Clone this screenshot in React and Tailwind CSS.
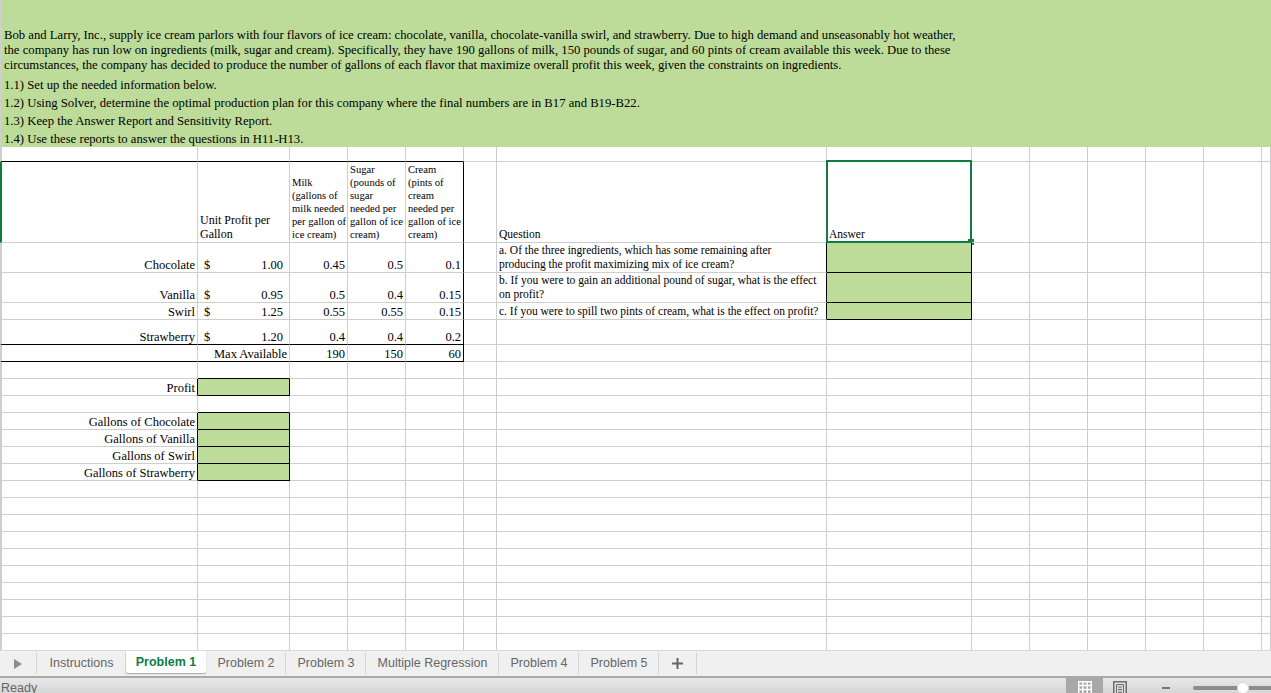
import React from "react";

const grid = "border-[#cecece]";
const black = "border-b-black";
const green = "bg-[#bddc9a]";

// columns A-H of each spreadsheet row, the rest are blank
const rows = [
  { a: { className: black }, b: { className: black }, c: { className: black }, d: { className: black }, e: { className: black } },
  {
    a: { className: "border-l-[#107c41]" },
    b: { text: ["Unit Profit per", "Gallon"], className: "text-[12px] leading-[14px] pl-[2px] pb-px" },
    c: { text: ["Milk", "(gallons of", "milk needed", "per gallon of", "ice cream)"], className: "text-[10.6px] leading-[13px] pl-[2px] pb-px" },
    d: { text: ["Sugar", "(pounds of", "sugar", "needed per", "gallon of ice", "cream)"], className: "text-[10.6px] leading-[13px] pl-[2px] pb-px" },
    e: { text: ["Cream", "(pints of", "cream", "needed per", "gallon of ice", "cream)"], className: "text-[10.6px] leading-[13px] pl-[2px] pb-px border-r-black" },
    g: { text: ["Question"], className: "text-[11.5px] pl-[2px] pb-px" },
    h: { text: ["Answer"], className: "text-[11.5px] pl-[2px] pb-px", selected: true },
  },
  {
    a: { text: ["Chocolate"], className: "items-end" },
    money: "1.00",
    c: { num: "0.45" }, d: { num: "0.5" }, e: { num: "0.1", className: "border-r-black" },
    g: { text: ["a. Of the three ingredients, which has some remaining after", "producing the profit maximizing mix of ice cream?"], className: "text-[11.5px] leading-[14px] pl-[2px] pb-px border-r-black" },
    h: { className: `${green} border-r-black ${black}` },
  },
  {
    a: { text: ["Vanilla"], className: "items-end" },
    money: "0.95",
    c: { num: "0.5" }, d: { num: "0.4" }, e: { num: "0.15", className: "border-r-black" },
    g: { text: ["b. If you were to gain an additional pound of sugar, what is the effect", "on profit?"], className: "text-[11.5px] leading-[14px] pl-[2px] pb-px border-r-black" },
    h: { className: `${green} border-r-black ${black}` },
  },
  {
    a: { text: ["Swirl"], className: "items-end" },
    money: "1.25",
    c: { num: "0.55" }, d: { num: "0.55" }, e: { num: "0.15", className: "border-r-black" },
    g: { text: ["c. If you were to spill two pints of cream, what is the effect on profit?"], className: "text-[11.5px] pl-[2px] pb-px border-r-black" },
    h: { className: `${green} border-r-black ${black}` },
  },
  {
    a: { text: ["Strawberry"], className: `items-end ${black}` },
    money: "1.20",
    moneyClass: black,
    c: { num: "0.4", className: black }, d: { num: "0.4", className: black }, e: { num: "0.2", className: `border-r-black ${black}` },
  },
  {
    a: { className: black },
    b: { text: ["Max Available"], className: `items-end pr-[2px] ${black}` },
    c: { num: "190", className: black }, d: { num: "150", className: black }, e: { num: "60", className: `border-r-black ${black}` },
  },
  { b: { className: black } },
  { a: { text: ["Profit"], className: "items-end border-r-black" }, b: { className: `${green} border-r-black ${black}` } },
  { b: { className: black } },
  { a: { text: ["Gallons of Chocolate"], className: "items-end border-r-black" }, b: { className: `${green} border-r-black ${black}` } },
  { a: { text: ["Gallons of Vanilla"], className: "items-end border-r-black" }, b: { className: `${green} border-r-black ${black}` } },
  { a: { text: ["Gallons of Swirl"], className: "items-end border-r-black" }, b: { className: `${green} border-r-black ${black}` } },
  { a: { text: ["Gallons of Strawberry"], className: "items-end border-r-black" }, b: { className: `${green} border-r-black ${black}` } },
  ...Array.from({ length: 10 }, () => ({})),
];

const keys = ["a", "b", "c", "d", "e", "f", "g", "h", "i", "j", "k", "l", "m", "n"];

const Cell = ({ spec = {}, col }) => {
  const leftEdge = col === "a" ? "border-l-2 pr-[2px]" : "";
  if (spec.num) {
    return (
      <div className={`border-r border-b ${grid} flex items-end justify-end pr-[2px] whitespace-nowrap ${spec.className || ""}`}>
        {spec.num}
      </div>
    );
  }
  return (
    <div className={`relative border-r border-b ${grid} ${leftEdge} flex flex-col justify-end whitespace-nowrap ${spec.className || ""}`}>
      {spec.text && spec.text.map((line) => <span key={line}>{line}</span>)}
      {spec.selected && (
        <div className="absolute -left-px -top-[2px] -right-px -bottom-px border-2 border-[#107c41]">
          <div className="absolute -right-[4px] -bottom-[4px] w-[6px] h-[6px] bg-[#107c41]" />
        </div>
      )}
    </div>
  );
};

const MoneyCell = ({ value, className }) => (
  <div className={`border-r border-b ${grid} flex items-end justify-between pl-[6px] pr-[6px] ${className || ""}`}>
    <span>$</span>
    <span>{value}</span>
  </div>
);

const tabs = [
  { name: "Instructions", w: "w-[89px]" },
  { name: "Problem 1", w: "w-[80px]", active: true },
  { name: "Problem 2", w: "w-[80px]" },
  { name: "Problem 3", w: "w-[80px]" },
  { name: "Multiple Regression", w: "w-[133px]" },
  { name: "Problem 4", w: "w-[80px]" },
  { name: "Problem 5", w: "w-[80px]" },
];

const App = () => {
  return (
    <div className="w-[1271px] h-[693px] overflow-hidden flex flex-col bg-white text-black text-[12.5px] leading-[13px] font-['Liberation_Serif',serif]">
      {/* Instructions banner */}
      <div className="h-[147px] shrink-0 bg-[#bddc9a] border-l-2 border-[#cecece] pl-[2px] pt-[28px] text-[12.7px] whitespace-nowrap">
        <div className="leading-[15px]">
          <div>Bob and Larry, Inc., supply ice cream parlors with four flavors of ice cream: chocolate, vanilla, chocolate-vanilla swirl, and strawberry.  Due to high demand and unseasonably hot weather,</div>
          <div>the company has run low on ingredients (milk, sugar and cream).  Specifically, they have 190 gallons of milk, 150 pounds of sugar, and 60 pints of cream available this week.  Due to these</div>
          <div>circumstances, the company has decided to produce the number of gallons of each flavor that maximize overall profit this week, given the constraints on ingredients.</div>
        </div>
        <div className="leading-[18px] mt-[3px]">
          <div>1.1) Set up the needed information below.</div>
          <div>1.2) Using Solver, determine the optimal production plan for this company where the final numbers are in B17 and B19-B22.</div>
          <div>1.3) Keep the Answer Report and Sensitivity Report.</div>
          <div>1.4) Use these reports to answer the questions in H11-H13.</div>
        </div>
      </div>

      {/* Sheet */}
      <div className="flex-1 min-h-0 overflow-hidden">
        <div className="grid grid-cols-[198px_92px_58px_58px_58px_33px_330px_145px_58px_58px_58px_58px_58px_1fr] grid-rows-[15px_81px_30px_30px_17px_25px_17px_repeat(17,17px)]">
          {rows.map((row, r) =>
            keys.map((col) =>
              col === "b" && row.money ? (
                <MoneyCell key={`${r}-${col}`} value={row.money} className={row.moneyClass} />
              ) : (
                <Cell key={`${r}-${col}`} spec={row[col]} col={col} />
              )
            )
          )}
        </div>
      </div>

      {/* Sheet tabs */}
      <div className="h-[26px] shrink-0 flex bg-[#f0f0f0] border-t border-[#d9d9d9] font-['Liberation_Sans',sans-serif] text-[12.5px] text-[#666]">
        <div className="w-[37px] flex items-center justify-center border-r border-[#d4d4d4] my-[2px]">
          <svg width="8" height="10" viewBox="0 0 8 10"><path d="M0 0 L8 5 L0 10 Z" fill="#8c8c8c" /></svg>
        </div>
        {tabs.map((t) =>
          t.active ? (
            <div key={t.name} className={`${t.w} h-[22px] flex items-center justify-center bg-white font-bold text-[#107c41] rounded-b-[2px] shadow-[0_1px_1px_#aaa]`}>
              {t.name}
            </div>
          ) : (
            <div key={t.name} className={`${t.w} flex items-center justify-center border-r border-[#d4d4d4] my-[2px] pl-px pb-px`}>
              {t.name}
            </div>
          )
        )}
        <div className="w-[38px] flex items-center justify-center border-r border-[#d4d4d4] my-[2px]">
          <svg width="11" height="11" viewBox="0 0 11 11"><path d="M4.5 0h2v4.5H11v2H6.5V11h-2V6.5H0v-2h4.5z" fill="#666" /></svg>
        </div>
      </div>

      {/* Status bar */}
      <div className="h-[17px] shrink-0 flex items-start border-t-2 border-[#a9a9a9] bg-gradient-to-b from-[#e8e8e8] to-[#d6d6d6] font-['Liberation_Sans',sans-serif] text-[12.5px] text-[#666] overflow-hidden">
        <span className="pl-[1px] leading-[16px] pt-[2px]">Ready</span>
        <div className="ml-auto flex items-start h-full">
          <div className="w-[37px] h-full bg-[#a8a8a8] flex justify-center pt-[3px]">
            <svg width="14" height="13" viewBox="0 0 14 13" fill="none" stroke="#fff" strokeWidth="1.4"><path d="M.7 .7h12.6v13H.7zM.7 4.5h12.6M.7 8.5h12.6M4.8 .7v13M9.2 .7v13" /></svg>
          </div>
          <div className="w-[34px] flex justify-center pt-[3px]">
            <svg width="14" height="13" viewBox="0 0 14 13" fill="none" stroke="#6e6e6e"><path strokeWidth="1.5" d="M.75 .75h12.5v13H.75z" /><path d="M3.5 3.5h7v10h-7zM5 6h4M5 8.5h4M5 11h4" /></svg>
          </div>
          <div className="w-[8px] h-[2px] bg-[#777] ml-[25px] mt-[9px]" />
          <div className="w-[78px] h-[4px] bg-[#8c8c8c] rounded-l-full ml-[23px] mt-[8px] relative">
            <div className="absolute left-[44px] -top-[4px] w-[12px] h-[12px] rounded-full bg-white border border-[#ddd]" />
          </div>
        </div>
      </div>
    </div>
  );
};

export default App;
